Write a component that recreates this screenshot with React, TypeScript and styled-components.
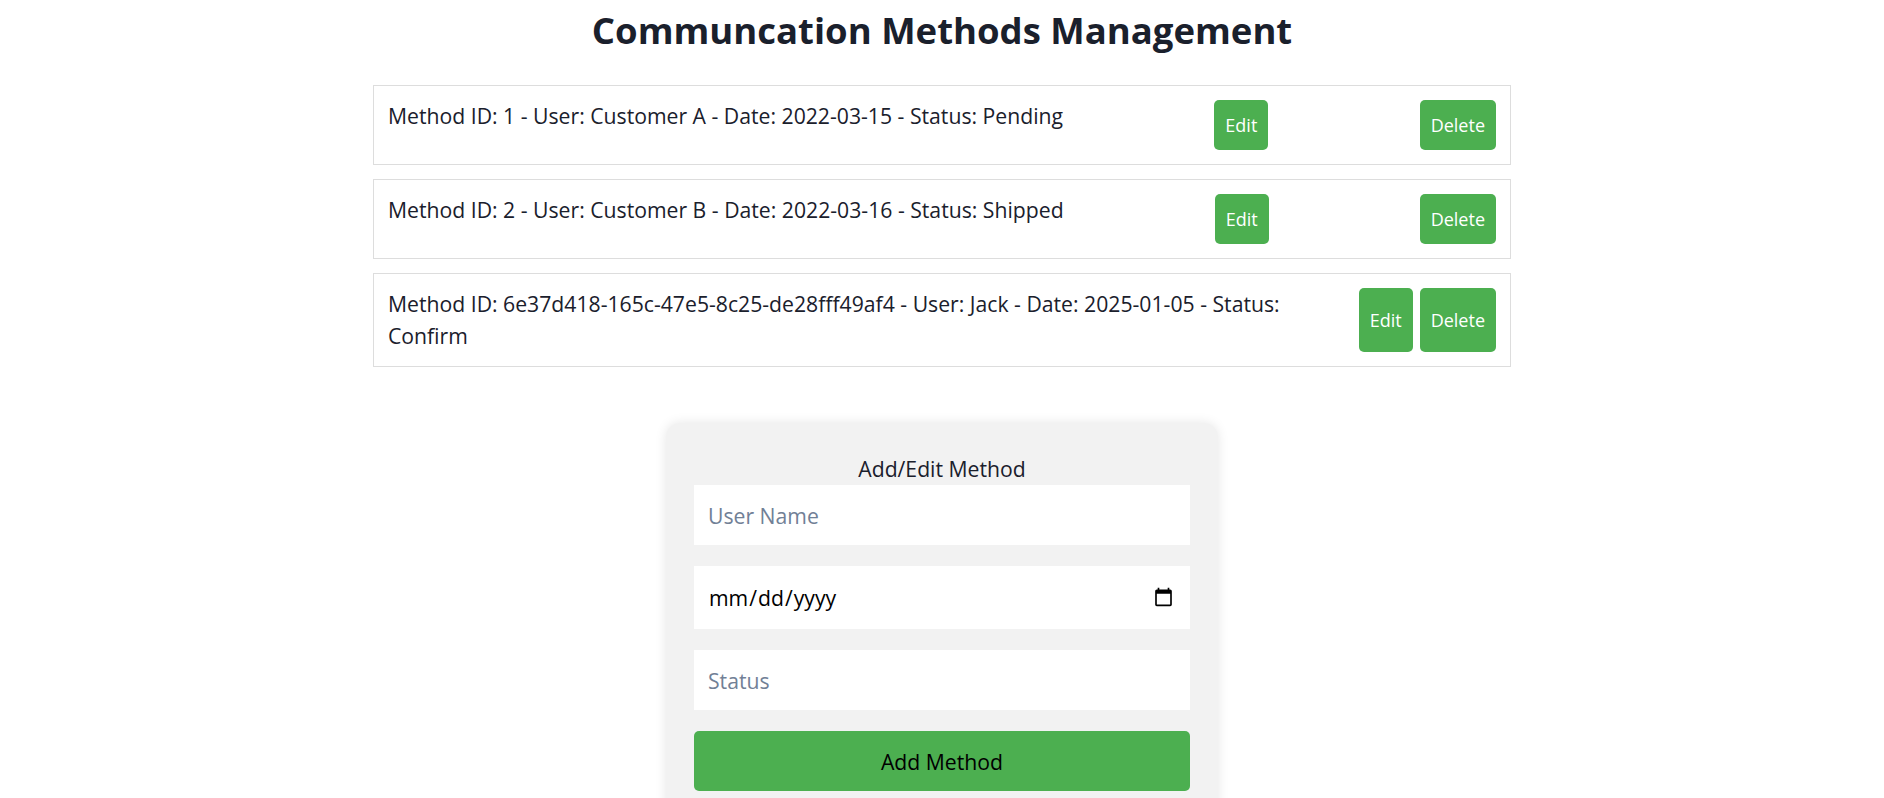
import styled, { createGlobalStyle } from "styled-components";

const GlobalStyle = createGlobalStyle`
    body {
        margin: 0;
        background: #fff;
        font-family: "Open Sans", "Noto Sans", sans-serif;
        color: #1a202c;
    }
`;

const Page = styled.main`
    padding-top: 6px;
`;

const Title = styled.h1`
    margin: 0 0 31px;
    text-align: center;
    font-size: 36.5px;
    line-height: 48px;
    font-weight: 700;
    color: #1a202c;
`;

const List = styled.div`
    width: 1138px;
    margin: 0 auto;
`;

const Row = styled.div`
    display: flex;
    justify-content: space-between;
    border: 1px solid #ddd;
    padding: 14px;
    margin-bottom: 14px;
    font-size: 21.2px;
    line-height: 32px;
    background: #fff;
`;

const RowText = styled.span`
    flex: 0 1 auto;
`;

const ActionButton = styled.button`
    flex-shrink: 0;
    min-height: 50px;
    margin-left: 7px;
    padding: 0 11px;
    border: none;
    border-radius: 5px;
    background: #4caf50;
    color: #fff;
    font-family: inherit;
    font-size: 18px;
    cursor: pointer;
`;

const FormCard = styled.form`
    box-sizing: border-box;
    width: 552px;
    margin: 56px auto 0;
    padding: 30px 28px;
    background: #f2f2f2;
    border-radius: 14px;
    box-shadow: 0 0 12px rgba(0, 0, 0, 0.1);
`;

const FormTitle = styled.div`
    text-align: center;
    font-size: 21.2px;
    line-height: 32px;
`;

const Field = styled.input<{ $tall?: boolean }>`
    display: block;
    box-sizing: border-box;
    width: 100%;
    height: ${(p) => (p.$tall ? "63px" : "60px")};
    margin-bottom: 21px;
    padding: 0 14px;
    border: none;
    background: #fff;
    font-family: inherit;
    font-size: 21.2px;
    color: #000;
    outline: none;

    &::placeholder {
        color: #718096;
    }
`;

const SubmitButton = styled.button`
    display: block;
    width: 100%;
    height: 60px;
    border: none;
    border-radius: 5px;
    background: #4caf50;
    color: #000;
    font-family: inherit;
    font-size: 21.2px;
    cursor: pointer;
`;

const methods = [
    { id: "1", user: "Customer A", date: "2022-03-15", status: "Pending" },
    { id: "2", user: "Customer B", date: "2022-03-16", status: "Shipped" },
    {
        id: "6e37d418-165c-47e5-8c25-de28fff49af4",
        user: "Jack",
        date: "2025-01-05",
        status: "Confirm",
    },
];

export default function App() {
    return (
        <>
            <GlobalStyle />
            <Page>
                <Title>Communcation Methods Management</Title>
                <List>
                    {methods.map((m) => (
                        <Row key={m.id}>
                            <RowText>
                                Method ID: {m.id} - User: {m.user} - Date: {m.date} - Status: {m.status}
                            </RowText>
                            <ActionButton type="button">Edit</ActionButton>
                            <ActionButton type="button">Delete</ActionButton>
                        </Row>
                    ))}
                </List>
                <FormCard onSubmit={(e) => e.preventDefault()}>
                    <FormTitle>Add/Edit Method</FormTitle>
                    <Field type="text" placeholder="User Name" />
                    <Field type="date" $tall />
                    <Field type="text" placeholder="Status" />
                    <SubmitButton type="submit">Add Method</SubmitButton>
                </FormCard>
            </Page>
        </>
    );
}
